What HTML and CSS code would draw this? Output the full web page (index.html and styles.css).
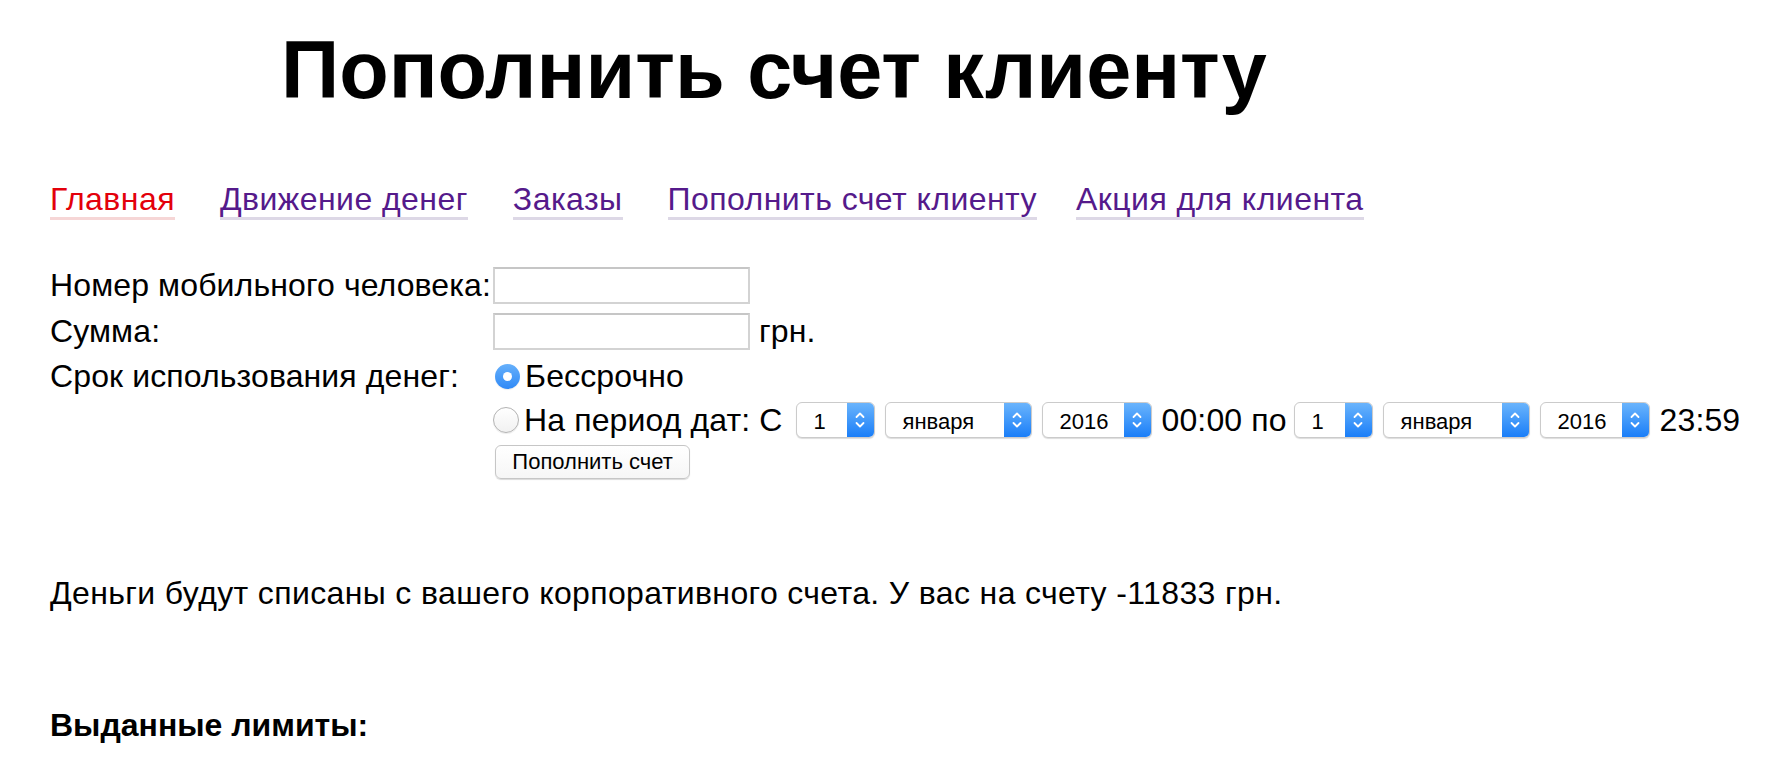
FILE: index.html
```html
<!DOCTYPE html>
<html lang="ru">
<head>
<meta charset="utf-8">
<title>Пополнить счет клиенту</title>
<link rel="stylesheet" href="styles.css">
</head>
<body>
<div class="page">
  <h1 class="title">Пополнить счет клиенту</h1>
  <nav class="menu">
    <a class="menu-link is-current" href="#">Главная</a>
    <a class="menu-link" href="#">Движение денег</a>
    <a class="menu-link" href="#">Заказы</a>
    <a class="menu-link" href="#">Пополнить счет клиенту</a>
    <a class="menu-link menu-link-last" href="#">Акция для клиента</a>
  </nav>

  <div class="form">
    <div class="form-label">Номер мобильного человека:</div>
    <div class="form-value"><span class="text-input"></span></div>

    <div class="form-label">Сумма:</div>
    <div class="form-value"><span class="text-input"></span><span class="unit">грн.</span></div>

    <div class="form-label">Срок использования денег:</div>
    <div class="form-value">
      <span class="choice"><span class="radio is-checked"></span><span>Бессрочно</span></span>
    </div>

    <div class="form-label"></div>
    <div class="form-value period">
      <span class="choice"><span class="radio"></span><span>На период дат: С</span></span>
      <span class="select select-day select-first"><span class="select-value">1</span><span class="select-arrow"><svg viewBox="0 0 12 24" width="12" height="24"><path d="M2.5 9 L6 5.5 L9.5 9 M2.5 15 L6 18.5 L9.5 15" fill="none" stroke="#fff" stroke-width="1.8" stroke-linecap="round" stroke-linejoin="round"/></svg></span></span>
      <span class="select select-month"><span class="select-value">января</span><span class="select-arrow"><svg viewBox="0 0 12 24" width="12" height="24"><path d="M2.5 9 L6 5.5 L9.5 9 M2.5 15 L6 18.5 L9.5 15" fill="none" stroke="#fff" stroke-width="1.8" stroke-linecap="round" stroke-linejoin="round"/></svg></span></span>
      <span class="select select-year"><span class="select-value">2016</span><span class="select-arrow"><svg viewBox="0 0 12 24" width="12" height="24"><path d="M2.5 9 L6 5.5 L9.5 9 M2.5 15 L6 18.5 L9.5 15" fill="none" stroke="#fff" stroke-width="1.8" stroke-linecap="round" stroke-linejoin="round"/></svg></span></span>
      <span class="time-to">00:00 по</span>
      <span class="select select-day"><span class="select-value">1</span><span class="select-arrow"><svg viewBox="0 0 12 24" width="12" height="24"><path d="M2.5 9 L6 5.5 L9.5 9 M2.5 15 L6 18.5 L9.5 15" fill="none" stroke="#fff" stroke-width="1.8" stroke-linecap="round" stroke-linejoin="round"/></svg></span></span>
      <span class="select select-month"><span class="select-value">января</span><span class="select-arrow"><svg viewBox="0 0 12 24" width="12" height="24"><path d="M2.5 9 L6 5.5 L9.5 9 M2.5 15 L6 18.5 L9.5 15" fill="none" stroke="#fff" stroke-width="1.8" stroke-linecap="round" stroke-linejoin="round"/></svg></span></span>
      <span class="select select-year"><span class="select-value">2016</span><span class="select-arrow"><svg viewBox="0 0 12 24" width="12" height="24"><path d="M2.5 9 L6 5.5 L9.5 9 M2.5 15 L6 18.5 L9.5 15" fill="none" stroke="#fff" stroke-width="1.8" stroke-linecap="round" stroke-linejoin="round"/></svg></span></span>
      <span>23:59</span>
    </div>

    <div class="form-label"></div>
    <div class="form-value"><span class="button">Пополнить счет</span></div>
  </div>

  <p class="note">Деньги будут списаны с вашего корпоративного счета. У вас на счету -11833 грн.</p>

  <p class="limits">Выданные лимиты:</p>
</div>
</body>
</html>
```

FILE: styles.css
```css
html, body {
  margin: 0;
  padding: 0;
  background: #ffffff;
}

body {
  font-family: "Liberation Sans", Arial, Helvetica, sans-serif;
  font-size: 32px;
  line-height: 37px;
  color: #000000;
}

.page {
  padding-left: 50px;
}

.title {
  margin: 24px 0 0 231px;
  font-size: 81px;
  line-height: 92px;
  font-weight: bold;
}

.menu {
  display: flex;
  gap: 45px;
  margin-top: 66px;
  line-height: 37px;
  letter-spacing: 0.45px;
}

.menu-link {
  color: #551a8b;
  text-decoration: none;
  border-bottom: 3px solid #ddd8e6;
  line-height: 35px;
  height: 35px;
}

.menu-link-last {
  margin-left: -6px;
}

.menu-link.is-current {
  color: #e3000b;
  border-bottom-color: #f6d6d6;
}

.form {
  display: grid;
  grid-template-columns: max-content 1fr;
  grid-template-rows: 46px 46px 44px 44px 40px;
  align-items: center;
  margin-top: 42px;
  letter-spacing: 0.12px;
}

.form-value {
  display: flex;
  align-items: center;
  padding-left: 2px;
}

.text-input {
  display: block;
  width: 257px;
  height: 37px;
  box-sizing: border-box;
  border: 2px solid #d3d3d3;
  border-top-color: #c6c6c6;
  background: #ffffff;
}

.unit {
  margin-left: 9px;
}

.choice {
  display: flex;
  align-items: center;
  gap: 5px;
}

.radio {
  width: 26px;
  height: 26px;
  box-sizing: border-box;
  border-radius: 50%;
  border: 1px solid #b3b3b3;
  background: linear-gradient(#ffffff, #f1f1f1);
  box-shadow: 0 1px 1px rgba(0, 0, 0, 0.08);
  display: flex;
  align-items: center;
  justify-content: center;
  margin-left: 0;
}

.radio.is-checked {
  border: none;
  background: linear-gradient(#66b0fb, #2f89f6);
  margin-left: 2px;
  width: 25px;
  height: 25px;
}

.radio.is-checked::after {
  content: "";
  width: 9px;
  height: 9px;
  border-radius: 50%;
  background: #ffffff;
}

.period {
  gap: 10px;
}

.select {
  display: flex;
  height: 36px;
  box-sizing: border-box;
  border: 1px solid #cbcbcb;
  border-radius: 6px;
  background: #ffffff;
  box-shadow: 0 1px 1px rgba(0, 0, 0, 0.14);
  overflow: hidden;
  font-size: 22px;
  letter-spacing: 0;
}

.select-first {
  margin-left: 3px;
}

.time-to {
  margin-right: -3px;
}

.select-day { width: 79px; }
.select-month { width: 147px; }
.select-year { width: 110px; }

.select-value {
  flex: 1;
  display: flex;
  align-items: center;
  padding-left: 17px;
  padding-top: 3px;
}

.select-arrow {
  width: 27px;
  display: flex;
  align-items: center;
  justify-content: center;
  background: linear-gradient(#6ab4fc, #1a7ef8);
}

.button {
  display: flex;
  align-items: center;
  justify-content: center;
  margin-left: 2px;
  width: 195px;
  height: 34px;
  box-sizing: border-box;
  border: 1px solid #c6c6c6;
  border-radius: 6px;
  background: linear-gradient(#ffffff, #f6f6f6);
  box-shadow: 0 1px 1px rgba(0, 0, 0, 0.15);
  font-size: 22px;
  line-height: 26px;
  letter-spacing: 0;
}

.note {
  margin: 93px 0 0 0;
  letter-spacing: 0.37px;
}

.limits {
  margin: 95px 0 0 0;
  font-weight: bold;
}
```
